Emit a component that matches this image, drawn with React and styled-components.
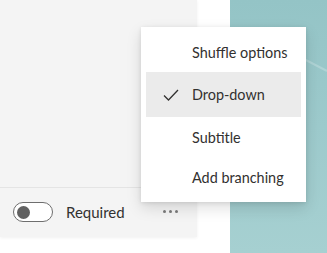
import React from "react";
import styled, { createGlobalStyle } from "styled-components";

const Global = createGlobalStyle`
  html, body { margin: 0; padding: 0; background: #ffffff; }
  body { font-family: Lato, "Open Sans", sans-serif; }
`;

const Page = styled.div`
  position: relative;
  display: flex;
  width: 327px;
  height: 253px;
  overflow: hidden;
  background: #ffffff;
`;

const LeftCol = styled.div`
  width: 197px;
  flex: none;
`;

const Card = styled.div`
  height: 237px;
  background: #f4f4f4;
  display: flex;
  flex-direction: column;
  box-shadow: 0 1px 3px rgba(0, 0, 0, 0.06);
`;

const CardBody = styled.div`
  height: 187px;
  border-bottom: 1px solid #e4e4e4;
`;

const Footer = styled.div`
  flex: 1;
  display: flex;
  align-items: center;
  padding-left: 13px;
  padding-bottom: 1px;
`;

const Toggle = styled.div`
  box-sizing: border-box;
  width: 40px;
  height: 20px;
  border: 1px solid #6e6e6e;
  border-radius: 10px;
  background: #ffffff;
  display: flex;
  align-items: center;
  padding-left: 3px;
`;

const Knob = styled.div`
  width: 13px;
  height: 13px;
  border-radius: 50%;
  background: #616161;
`;

const Label = styled.span`
  margin-left: 13px;
  font-size: 15px;
  color: #323130;
`;

const More = styled.div`
  margin-left: 38px;
  display: flex;
  gap: 3px;
  margin-top: -2px;
`;

const Dot = styled.span`
  width: 3px;
  height: 3px;
  border-radius: 50%;
  background: #7a7a7a;
`;

const Gap = styled.div`
  width: 33px;
  flex: none;
`;

const Teal = styled.div`
  flex: 1;
  position: relative;
  background: linear-gradient(180deg, #94c4c6 0%, #9dcacc 50%, #a6d0d1 100%);
  overflow: hidden;
`;

const Menu = styled.div`
  position: absolute;
  left: 141px;
  top: 27px;
  width: 165px;
  box-sizing: border-box;
  padding: 5px;
  background: #ffffff;
  box-shadow: 0 6px 14px rgba(0, 0, 0, 0.13), 0 1px 4px rgba(0, 0, 0, 0.1);
`;

const Item = styled.div`
  height: ${(p) => (p.$selected ? 45 : 40)}px;
  display: flex;
  align-items: center;
  position: relative;
  padding-left: 46px;
  background: ${(p) => (p.$selected ? "#ebebeb" : "transparent")};
  font-size: 14.4px;
  color: #323130;
`;

const Check = styled.svg`
  position: absolute;
  left: 17px;
  top: 50%;
  transform: translateY(-50%);
`;

const items = [
  { label: "Shuffle options" },
  { label: "Drop-down", selected: true },
  { label: "Subtitle" },
  { label: "Add branching" },
];

export default function App() {
  return (
    <>
      <Global />
      <Page>
        <LeftCol>
          <Card>
            <CardBody />
            <Footer>
              <Toggle>
                <Knob />
              </Toggle>
              <Label>Required</Label>
              <More>
                <Dot />
                <Dot />
                <Dot />
              </More>
            </Footer>
          </Card>
        </LeftCol>
        <Gap />
        <Teal>
          <svg width="97" height="253" style={{ position: "absolute", left: 0, top: 0 }}>
            <line x1="70" y1="57" x2="97" y2="71" stroke="rgba(255,255,255,0.22)" strokeWidth="2" />
          </svg>
        </Teal>
        <Menu>
          {items.map((it) => (
            <Item key={it.label} $selected={it.selected}>
              {it.selected && (
                <Check width="16" height="12" viewBox="0 0 16 12">
                  <path d="M1 6.5 L5.5 11 L15 1" fill="none" stroke="#323130" strokeWidth="1.3" />
                </Check>
              )}
              {it.label}
            </Item>
          ))}
        </Menu>
      </Page>
    </>
  );
}
